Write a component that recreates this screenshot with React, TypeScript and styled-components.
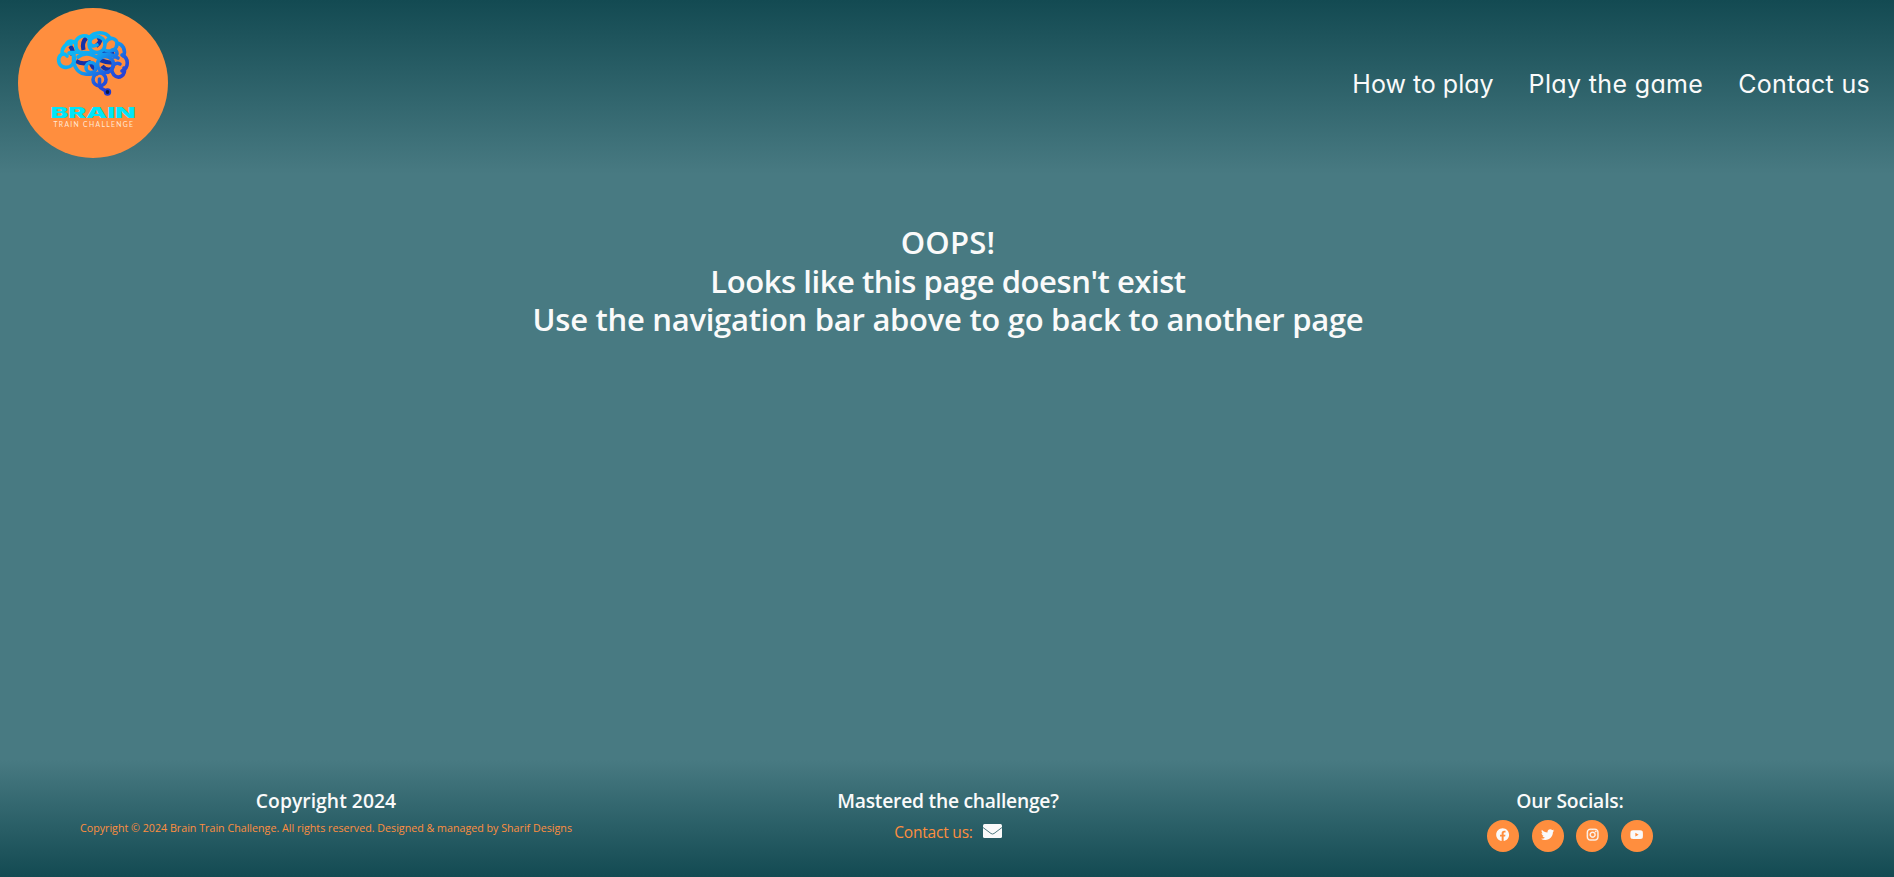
import React from "react";
import styled, { createGlobalStyle } from "styled-components";
import { FaFacebook, FaInstagram, FaTwitter, FaYoutube } from "react-icons/fa";

const colors = {
  deep: "#134a52",
  teal: "#487a82",
  orange: "#ff8e3e",
  light: "#fafafa",
};

const GlobalStyle = createGlobalStyle`
  *, *::before, *::after { box-sizing: border-box; }
  body {
    margin: 0;
    background: ${colors.teal};
    color: ${colors.light};
    font-family: "Open Sans", "Noto Sans", sans-serif;
    overflow: hidden;
  }
`;

const Page = styled.div`
  display: flex;
  flex-direction: column;
  height: 100vh;
`;

const Header = styled.header`
  display: flex;
  align-items: center;
  justify-content: space-between;
  height: 174px;
  padding: 0 24px 8px 18px;
  background: linear-gradient(to top, ${colors.teal}, ${colors.deep});
`;

const Logo = styled.svg`
  display: block;
  width: 150px;
  height: 150px;
`;

const Nav = styled.nav`
  display: flex;
  gap: 35px;
  padding-top: 2px;
`;

const NavLink = styled.a<{ $tracking: number }>`
  color: ${colors.light};
  font-family: Inter, sans-serif;
  font-feature-settings: "cv11";
  font-size: 25px;
  line-height: 38px;
  letter-spacing: ${(p) => p.$tracking}px;
  text-decoration: none;
  white-space: nowrap;
`;

const Main = styled.main`
  flex: 1;
  padding: 49px 0 0 2px;
`;

const Message = styled.h1`
  margin: 0;
  font-size: 31px;
  font-weight: 600;
  line-height: 38.6px;
  text-align: center;
`;

const Line = styled.span<{ $tracking: number }>`
  display: block;
  letter-spacing: ${(p) => p.$tracking}px;
`;

const Footer = styled.footer`
  display: grid;
  grid-template-columns: repeat(3, 622px);
  justify-content: center;
  height: 117px;
  padding: 29px 0 0 2px;
  background: linear-gradient(to bottom, ${colors.teal}, ${colors.deep});
`;

const Column = styled.section`
  display: flex;
  flex-direction: column;
  align-items: center;
`;

const Title = styled.h2<{ $tracking: number }>`
  margin: 0 0 7px;
  font-size: 19.3px;
  font-weight: 600;
  line-height: 24px;
  letter-spacing: ${(p) => p.$tracking}px;
`;

const Copyright = styled.p`
  margin: 0;
  color: ${colors.orange};
  font-size: 10.7px;
  line-height: 17px;
`;

const Contact = styled.p`
  display: flex;
  align-items: center;
  gap: 9px;
  margin: 0;
  color: ${colors.orange};
  font-size: 15.5px;
  line-height: 24px;
  letter-spacing: -0.2px;
`;

const MailIcon = styled.svg`
  width: 19px;
  height: 14px;
  margin: 0 0 2px 1px;
`;

const Socials = styled.div`
  display: flex;
  gap: 12.7px;
`;

const SocialLink = styled.a`
  display: flex;
  align-items: center;
  justify-content: center;
  width: 32px;
  height: 32px;
  padding-bottom: 2px;
  border-radius: 50%;
  background: ${colors.orange};
  color: ${colors.light};

  svg {
    width: auto;
    height: 13.3px;
    overflow: visible;
  }
`;

const BoldInstagram = styled(FaInstagram)`
  stroke: currentColor;
  stroke-width: 14px;
`;

function BrainLogo() {
  return (
    <Logo viewBox="18 8 150 150" role="img" aria-label="Brain Train Challenge">
      <defs>
        <linearGradient id="brain" gradientUnits="userSpaceOnUse" x1="76" y1="40" x2="114" y2="86">
          <stop offset="0" stopColor="#0cbcf7" />
          <stop offset="0.45" stopColor="#129eef" />
          <stop offset="0.75" stopColor="#1f5ce0" />
          <stop offset="1" stopColor="#2b3bd2" />
        </linearGradient>
      </defs>
      <circle cx="93" cy="83" r="75" fill={colors.orange} />
      <g fill="none" stroke="#1431a8" strokeWidth="4.200">
        <path d="M70 46q4 4 2 10M83.500 50q-2-8 3-12M98 37q5 4-2 9M76 61q6 4 15 1M103 51q4 3 11 1M100 60q7 3 14 3M91 63q1 5 6 6M102 66q4 5 10 3" />
      </g>
      <g fill="none" stroke="url(#brain)" strokeWidth="3.600" strokeLinecap="round">
        <path d="M67 56C63 51 58 56 58.700 61C59.500 68 68 69 72 65C76 61 75 54 70 53" />
        <path d="M62.500 54C61 49 66 42 71 44" />
        <path d="M67 43C69 40 73 41 75 43C77 37 83 34 89 37" />
        <path d="M76 43C75 48 77 52 82 53M69 53C74 51 84 53 92 53" />
        <path d="M89 38C94 31 106 31 110 38" />
        <circle cx="97" cy="44.500" r="8" />
        <path d="M90 39C89 46 93 47 97 45" />
        <path d="M106 42C109 36 117 38 117 44C117 49 111 53 105 50" />
        <path d="M117 43C123 44 126 50 123.500 56M112 50C117 49 119 54 114 57" />
        <path d="M74 54C72 63 76 73 85 74C90 75 94 73 97 74" />
        <path d="M78 57C84 52 92 54 98 58" />
        <circle cx="91" cy="67.500" r="5" />
        <circle cx="105.500" cy="64.500" r="8" />
        <path d="M98 56C104 53 112 54 118 58M122 55C129 58 129 68 122 71" />
        <path d="M120 64C114 61 109 69 114 75C119 80 126 75 124 68" />
        <circle cx="99.500" cy="79.500" r="6.500" />
        <path d="M99.500 79V86C101 90 105 89 107 92" />
      </g>
      <circle cx="107.500" cy="92" r="3.700" fill="#203bd2" />
      <circle cx="107.500" cy="92" r="1.900" fill="#0b163e" />
      <text
        x="50.500" y="118" textLength="85" lengthAdjust="spacingAndGlyphs"
        fontFamily="Inter" fontWeight="900" fontSize="14.500" fill="#00e5f8"
      >
        BRAIN
      </text>
      <text
        x="53.500" y="126.800" textLength="79.500"
        fontFamily="Lato" fontSize="6.800" fill="#ffe9d8"
      >
        TRAIN CHALLENGE
      </text>
    </Logo>
  );
}

const links = [
  { label: "How to play", tracking: 0 },
  { label: "Play the game", tracking: 0.35 },
  { label: "Contact us", tracking: 0.3 },
];

const socials = [
  { name: "Facebook", Icon: FaFacebook },
  { name: "Twitter", Icon: FaTwitter },
  { name: "Instagram", Icon: BoldInstagram },
  { name: "YouTube", Icon: FaYoutube },
];

export default function App() {
  return (
    <Page>
      <GlobalStyle />
      <Header>
        <BrainLogo />
        <Nav>
          {links.map((link) => (
            <NavLink key={link.label} $tracking={link.tracking}>{link.label}</NavLink>
          ))}
        </Nav>
      </Header>
      <Main>
        <Message>
          <Line $tracking={0.2}>OOPS!</Line>
          <Line $tracking={-0.44}>Looks like this page doesn't exist</Line>
          <Line $tracking={-0.28}>Use the navigation bar above to go back to another page</Line>
        </Message>
      </Main>
      <Footer>
        <Column>
          <Title $tracking={0.05}>Copyright 2024</Title>
          <Copyright>
            Copyright © 2024 Brain Train Challenge. All rights reserved. Designed &amp; managed by Sharif Designs
          </Copyright>
        </Column>
        <Column>
          <Title $tracking={-0.25}>Mastered the challenge?</Title>
          <Contact>
            Contact us:
            <MailIcon viewBox="0 0 19 14" aria-label="Email">
              <rect width="19" height="14" rx="1.500" fill={colors.light} />
              <path d="M0 3.500L8 9.500Q9.500 10.500 11 9.500L19 3.500" fill="none" stroke="#3b6a72" strokeWidth="0.900" />
            </MailIcon>
          </Contact>
        </Column>
        <Column>
          <Title $tracking={-0.15}>Our Socials:</Title>
          <Socials>
            {socials.map(({ name, Icon }) => (
              <SocialLink key={name} aria-label={name}>
                <Icon />
              </SocialLink>
            ))}
          </Socials>
        </Column>
      </Footer>
    </Page>
  );
}
